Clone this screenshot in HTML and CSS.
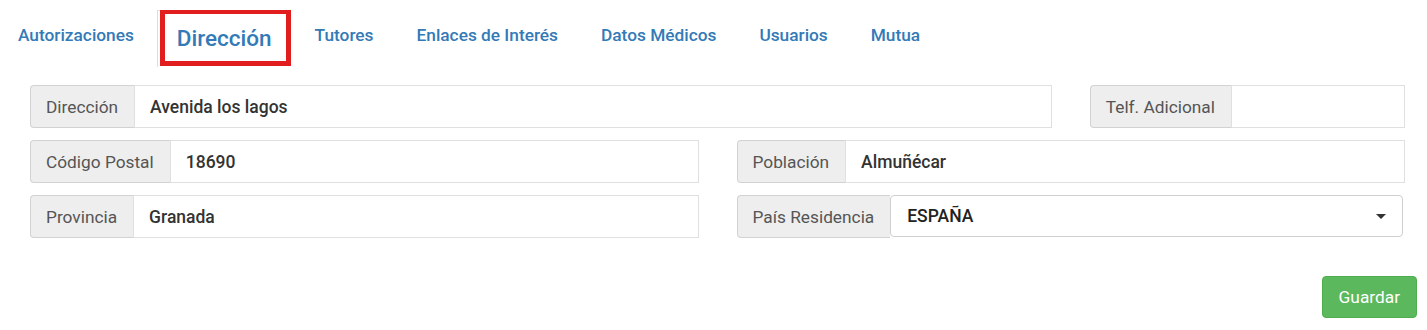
FILE: index.html
```html
<!DOCTYPE html>
<html lang="es">
<head>
  <meta charset="UTF-8">
  <title>Dirección</title>
  <link rel="stylesheet" href="styles.css">
</head>
<body>

<ul class="tabs">
  <li><a href="#">Autorizaciones</a></li>
  <li class="active"><a href="#">Dirección</a></li>
  <li><a href="#">Tutores</a></li>
  <li><a href="#">Enlaces de Interés</a></li>
  <li><a href="#">Datos Médicos</a></li>
  <li><a href="#">Usuarios</a></li>
  <li><a href="#">Mutua</a></li>
</ul>

<form class="form">
  <div class="row">
    <div class="group span-9">
      <span class="addon">Dirección</span>
      <input class="field" type="text" value="Avenida los lagos">
    </div>
    <div class="group span-3">
      <span class="addon">Telf. Adicional</span>
      <input class="field" type="text" value="">
    </div>
  </div>

  <div class="row">
    <div class="group span-6">
      <span class="addon">Código Postal</span>
      <input class="field" type="text" value="18690">
    </div>
    <div class="group span-6">
      <span class="addon">Población</span>
      <input class="field" type="text" value="Almuñécar">
    </div>
  </div>

  <div class="row">
    <div class="group span-6">
      <span class="addon">Provincia</span>
      <input class="field" type="text" value="Granada">
    </div>
    <div class="group span-6">
      <span class="addon">País Residencia</span>
      <div class="select">
        <span>ESPAÑA</span>
        <span class="caret"></span>
      </div>
    </div>
  </div>

  <div class="actions">
    <button type="button" class="btn-save">Guardar</button>
  </div>
</form>

</body>
</html>
```

FILE: styles.css
```css
body {
  font-family: Roboto, "Liberation Sans", Arial, sans-serif;
  margin: 0;
  padding: 0;
  background-color: #ffffff;
  color: #333;
}
.tabs {
  display: flex;
  align-items: flex-start;
  list-style: none;
  margin: 0;
  padding: 10px 0 0 18px;
  height: 57px;
}
.tabs li a {
  display: block;
  color: #337ab7;
  font-size: 17.3px;
  font-weight: 500;
  text-decoration: none;
  line-height: 20px;
  padding-top: 15px;
}
.tabs li {
  margin-right: 43px;
}
.tabs li:first-child {
  margin-right: 23px;
}
.tabs li.active {
  margin-right: 24px;
  border-left: 1px solid #ddd;
  border-top: 1px solid #ddd;
  padding-left: 2px;
  height: 57px;
  box-sizing: border-box;
}
.tabs li.active a {
  border: 5px solid #e21d1d;
  border-top-width: 4px;
  height: 56px;
  box-sizing: border-box;
  margin-top: -1px;
  padding: 11px 14px 0 12px;
  font-size: 22.5px;
  line-height: 26px;
}
.form {
  padding: 18px 22px 0 30px;
}
.row {
  display: grid;
  grid-template-columns: repeat(12, 1fr);
  column-gap: 38px;
  margin-bottom: 12px;
}
.span-9 {
  grid-column: span 9;
}
.span-6 {
  grid-column: span 6;
}
.span-3 {
  grid-column: span 3;
}
.group {
  display: flex;
  height: 43px;
}
.addon {
  display: flex;
  align-items: center;
  padding: 0 16px 0 15px;
  background-color: #eeeeee;
  border: 1px solid #d2d2d2;
  border-right: none;
  border-radius: 4px 0 0 4px;
  color: #555;
  font-size: 17.3px;
  white-space: nowrap;
}
.field {
  flex: 1;
  min-width: 0;
  border: 1px solid #e0e0e0;
  border-radius: 0;
  padding: 0 15px;
  font-family: inherit;
  font-size: 17.5px;
  font-weight: 500;
  color: #333;
  outline: none;
}
.select {
  flex: 1;
  display: flex;
  align-items: center;
  justify-content: space-between;
  border: 1px solid #cfcfcf;
  border-radius: 4px;
  height: 42px;
  box-sizing: border-box;
  margin-right: 2px;
  padding: 0 16px 0 16px;
  font-size: 17.5px;
  font-weight: 500;
  color: #222;
}
.caret {
  width: 0;
  height: 0;
  border-left: 5px solid transparent;
  border-right: 5px solid transparent;
  border-top: 5px solid #333;
}
.actions {
  display: flex;
  justify-content: flex-end;
  margin-top: 38px;
  margin-right: -12px;
}
.btn-save {
  background-color: #5cb85c;
  border: 1px solid #4cae4c;
  border-radius: 4px;
  color: white;
  font-family: inherit;
  font-size: 17.3px;
  height: 42px;
  padding: 0 16px;
  cursor: pointer;
}
```
